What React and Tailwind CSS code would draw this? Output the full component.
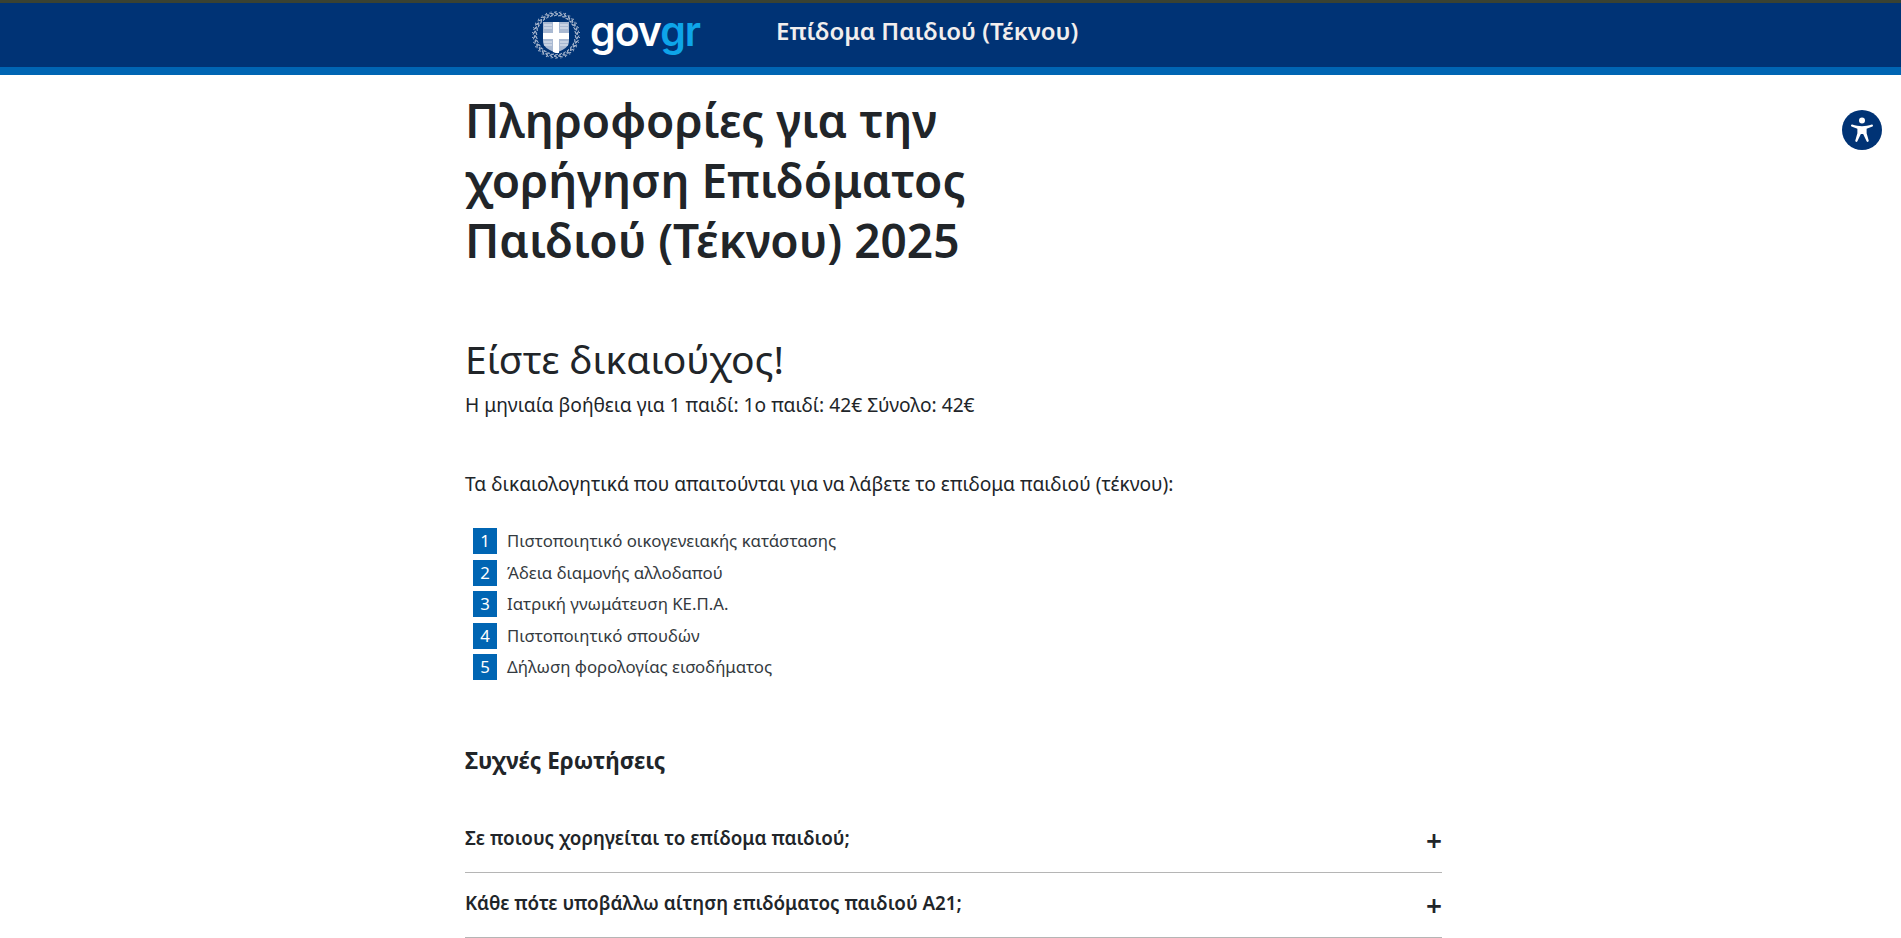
const documents = [
    "Πιστοποιητικό οικογενειακής κατάστασης",
    "Άδεια διαμονής αλλοδαπού",
    "Ιατρική γνωμάτευση ΚΕ.Π.Α.",
    "Πιστοποιητικό σπουδών",
    "Δήλωση φορολογίας εισοδήματος",
];

const questions = [
    "Σε ποιους χορηγείται το επίδομα παιδιού;",
    "Κάθε πότε υποβάλλω αίτηση επιδόματος παιδιού Α21;",
];

function Crest() {
    const ticks = Array.from({ length: 30 }, (_, i) => i * 12);
    return (
        <svg width="48" height="48" viewBox="0 0 48 48" className="shrink-0">
            <g stroke="#aebbd0" strokeWidth="1" fill="none">
                {ticks.map((deg) => (
                    <g key={deg} transform={`rotate(${deg} 24 24)`}>
                        <line x1="22" y1="1" x2="26" y2="3" />
                        <line x1="22" y1="5" x2="26" y2="3" />
                        <line x1="24" y1="0" x2="24" y2="6" strokeDasharray="1 1" />
                    </g>
                ))}
            </g>
            <path d="M11 11h26v20q0 6-13 11q-13-5-13-11z" fill="#a9b9d2" />
            <path d="M21 11h6v11h10v6H27v14h-3l-3-1V28H11v-6h10z" fill="#fff" />
            <g stroke="#e6ebf3" strokeWidth="1">
                <line x1="12" y1="14" x2="20" y2="14" />
                <line x1="12" y1="17" x2="20" y2="17" />
                <line x1="28" y1="14" x2="36" y2="14" />
                <line x1="28" y1="17" x2="36" y2="17" />
                <line x1="12" y1="31" x2="20" y2="31" />
                <line x1="12" y1="34" x2="20" y2="34" />
                <line x1="28" y1="31" x2="36" y2="31" />
                <line x1="28" y1="34" x2="36" y2="34" />
            </g>
        </svg>
    );
}

function AccessibilityButton() {
    return (
        <div className="absolute top-[110px] left-[1842px] w-10 h-10 rounded-full bg-[#003375] flex items-center justify-center">
            <svg width="30" height="30" viewBox="0 0 26 26" fill="#fff">
                <circle cx="13" cy="4.800" r="2.600" />
                <path d="M4.500 8.200c-.9-.3-1.500 1.200-.6 1.700l5.100 2.100v3.900l-1.800 6.300c-.2 1.100 1.300 1.600 1.800.6L12 16.500h2l3 6.300c.5 1 2 .5 1.800-.6L17 15.900V12l5.100-2.100c.9-.5.300-2-.6-1.700-2.900 1-5.700 1.500-8.500 1.500s-5.600-.5-8.500-1.500z" />
            </svg>
        </div>
    );
}

export default function App() {
    return (
        <div className="relative min-h-[938px] bg-white overflow-hidden font-['Noto_Sans','Open_Sans',sans-serif] text-[#212529]">
            <header>
                <div className="h-[3px] bg-[#3a4232]" />
                <div className="h-[64px] bg-[#003375] pl-[532px] flex items-start">
                    <div className="flex items-start w-[244px] pt-[8px]">
                        <Crest />
                        <span className="ml-[10px] -mt-[5px] text-[41px] leading-[50px] font-semibold tracking-[-1px] text-white font-['Inter',sans-serif]">
                            gov<span className="text-[#0ea5e9]">gr</span>
                        </span>
                    </div>
                    <div className="pt-[12px] text-[24px] leading-[32px] font-semibold text-[#f1eeee]">
                        Επίδομα Παιδιού (Τέκνου)
                    </div>
                </div>
                <div className="h-2 bg-[#0065b3]" />
            </header>

            <AccessibilityButton />

            <main className="ml-[465px] w-[977px]">
                <h1 className="w-[560px] pt-[15px] text-[46px] leading-[60px] font-semibold">
                    Πληροφορίες για την χορήγηση Επιδόματος Παιδιού (Τέκνου) 2025
                </h1>
                <h2 className="mt-[65px] text-[39px] leading-[48px]">
                    Είστε δικαιούχος!
                </h2>
                <p className="mt-[7px] text-[19.2px] leading-[29px]">
                    Η μηνιαία βοήθεια για 1 παιδί: 1ο παιδί: 42€ Σύνολο: 42€
                </p>
                <p className="mt-[50px] text-[19.2px] leading-[29px]">
                    Τα δικαιολογητικά που απαιτούνται για να λάβετε το επιδομα
                    παιδιού (τέκνου):
                </p>
                <ol className="mt-[30px] ml-2 flex flex-col gap-[5.500px]">
                    {documents.map((d, i) => (
                        <li key={d} className="flex items-center h-[26px]">
                            <span className="w-6 h-[26px] bg-[#0065b3] text-white text-[16.800px] flex items-center justify-center">
                                {i + 1}
                            </span>
                            <span className="ml-[10px] text-[16.800px] text-[#343a40]">
                                {d}
                            </span>
                        </li>
                    ))}
                </ol>
                <h3 className="mt-[66px] text-[22.500px] leading-[30px] font-bold">
                    Συχνές Ερωτήσεις
                </h3>
                <div className="mt-[32px]">
                    {questions.map((q) => (
                        <div
                            key={q}
                            className="h-[65px] border-b border-[#b5b5b5] flex items-center justify-between"
                        >
                            <span className="text-[18.800px] font-semibold -mt-[3px]">{q}</span>
                            <span className="text-[28px] font-semibold leading-none">+</span>
                        </div>
                    ))}
                </div>
            </main>
        </div>
    );
}
